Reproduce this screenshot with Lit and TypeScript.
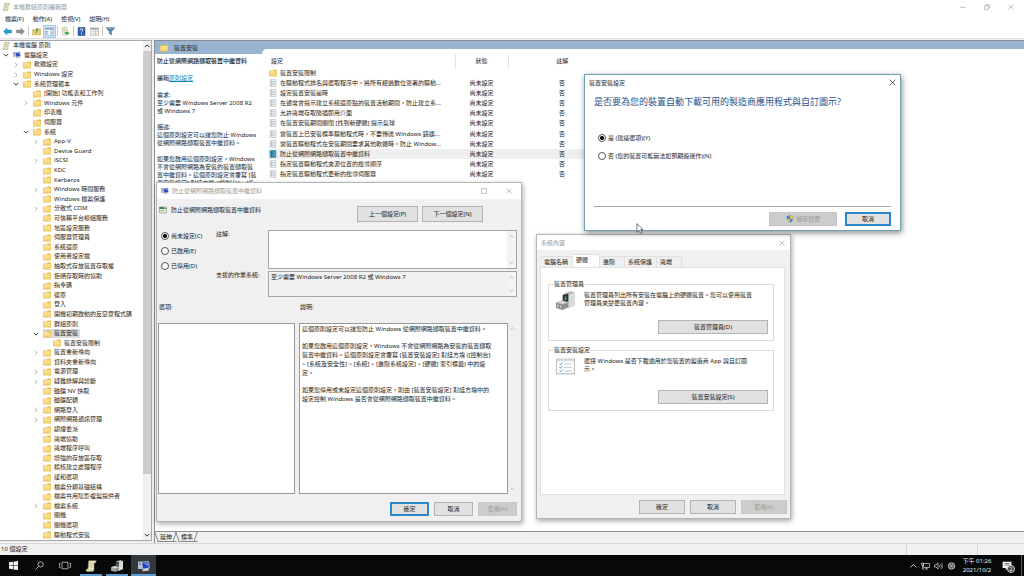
import { LitElement, html, css, svg, nothing } from "lit";
import { customElement, property } from "lit/decorators.js";
import { classMap } from "lit/directives/class-map.js";

const base = css`
  *, *::before, *::after { box-sizing: border-box; }
  :host {
    font-family: "Noto Sans", "Noto Sans CJK TC", sans-serif;
    font-size: 6px;
    line-height: 8px;
    color: #1c1c1c;
  }
  button, textarea, input { font: inherit; color: inherit; margin: 0; padding: 0; }
  button { background: none; border: 0; white-space: nowrap; }
  h1, h2, p, ul, fieldset { margin: 0; padding: 0; font-weight: normal; font-size: inherit; }
  .btn { background: #e1e1e1; border: 1px solid #b4b4b4; line-height: 10px; text-align: center; }
  .btn.primary { border: 2px solid #2b88cb; }
  .btn:disabled { background: #cccccc; border-color: #c6c6c6; color: #9a9a9a; }
  .radio { display: flex; align-items: center; gap: 2px; line-height: 8px; }
  .radio input {
    appearance: none; width: 8px; height: 8px; flex: none;
    border: 1px solid #555; border-radius: 50%; background: #fff;
  }
  .radio input:checked { background: radial-gradient(circle, #111 0 1.6px, #fff 2.4px); }
`;

const glyphs: Record<string, { box: string; art: unknown }> = {
  folder: { box: "0 0 16 16", art: svg`<path d="M0 3h8l1-2h6q1 0 1 1v13H0z" fill="#e3bf5a"/><path d="M1 4h14v10H1z" fill="#fbdd8b"/><path d="M1 11h14v3H1z" fill="#f3cf6e"/>` },
  scroll: { box: "0 0 16 16", art: svg`<path d="M5 1h10l-1 3h-2v9q0 2-2 2H2q-1-2 1-3h1z" fill="#f2eebd" stroke="#8b8a70" stroke-width=".9"/><path d="M6 4h4M6 6.5h4M6 9h4" stroke="#a4a283"/><path d="M2 12h8v3H2z" fill="#d9d49c"/>` },
  monitor: { box: "0 0 16 16", art: svg`<path d="M0 2h6v10H0z" fill="#b9bfcc"/><path d="M1 4h3M1 6h3" stroke="#69738a"/><path d="M5 3l9-1 1 9-9 1z" fill="#2445b8" stroke="#d5dbe8"/><path d="M8 4l5 0 0 4z" fill="#6e9af0"/><path d="M5 13l8-2 2 3-8 1z" fill="#ccd2dc"/>` },
  policy: { box: "0 0 12 14", art: svg`<path d="M1 1h10v12H1z" fill="#fafafa" stroke="#a5adb4"/><path d="M3 4h2M3 7h2M3 10h2" stroke="#3c5265" stroke-width="1.4"/><path d="M6.500 4h3M6.500 7h3M6.500 10h3" stroke="#8a959f"/>` },
  policySel: { box: "0 0 12 14", art: svg`<path d="M1 1h10v12H1z" fill="#3c91b8" stroke="#2b7fa6"/><path d="M3 4h2M3 7h2M3 10h2" stroke="#12384e" stroke-width="1.4"/><path d="M6.500 4h3M6.500 7h3M6.500 10h3" stroke="#79b9d4"/>` },
  setting: { box: "0 0 16 16", art: svg`<path d="M1 2h14v12H1z" fill="#f5f3df" stroke="#678"/><path d="M1 2h14v4H1z" fill="#377f86"/><path d="M3 9l2 2 3-4" stroke="#2b8a3f" fill="none" stroke-width="1.5"/><path d="M9 9h4M9 12h4" stroke="#b48b3c"/><path d="M10 2h5v3h-5z" fill="#e4c64e"/>` },
  right: { box: "0 0 8 8", art: svg`<path d="M2.500 1l3 3-3 3" fill="none" stroke="#9a9a9a"/>` },
  down: { box: "0 0 8 8", art: svg`<path d="M1 2.500l3 3 3-3" fill="none" stroke="#333" stroke-width="1.3"/>` },
  up: { box: "0 0 8 8", art: svg`<path d="M1 5.500l3-3 3 3" fill="none" stroke="#333" stroke-width="1.3"/>` },
  upDim: { box: "0 0 8 8", art: svg`<path d="M1 5.500l3-3 3 3" fill="none" stroke="#aaa" stroke-width="1.2"/>` },
  downDim: { box: "0 0 8 8", art: svg`<path d="M1 2.500l3 3 3-3" fill="none" stroke="#aaa" stroke-width="1.2"/>` },
  close: { box: "0 0 10 10", art: svg`<path d="M1 1l8 8M9 1l-8 8" stroke="currentColor" fill="none"/>` },
  max: { box: "0 0 10 10", art: svg`<path d="M1 1h8v8H1z" stroke="currentColor" fill="none"/>` },
  restore: { box: "0 0 10 10", art: svg`<path d="M1 3h6v6H1zM3 3V1h6v6H7" stroke="currentColor" fill="none"/>` },
  min: { box: "0 0 10 10", art: svg`<path d="M0 5.500h10" stroke="currentColor"/>` },
  back: { box: "0 0 16 14", art: svg`<path d="M1 7l6-6v3.500h8v5H7V13z" fill="#2f9bd8" stroke="#1c75ad" stroke-width=".8"/>` },
  forward: { box: "0 0 16 14", art: svg`<path d="M15 7L9 1v3.500H1v5h8V13z" fill="#8d8f92" stroke="#747678" stroke-width=".8"/>` },
  upFolder: { box: "0 0 16 16", art: svg`<path d="M1 5h5l1-2h8v11H1z" fill="#ecd074" stroke="#c2a14a"/><path d="M4 11q3 0 4-5L6 7l3-5 3 4-2 0q-1 6-6 5z" fill="#3ba141"/>` },
  tree: { box: "0 0 16 14", art: svg`<path d="M.5.5h15v13H.5z" fill="#fff" stroke="#7890a8"/><path d="M1 1h14v3H1z" fill="#8ea9c2"/><path d="M3 6v6M3 7h3M3 10h3M9 6h5M9 8.500h5M9 11h5" stroke="#5b7fa3"/>` },
  exportList: { box: "0 0 16 16", art: svg`<path d="M2 1h9v13H2z" fill="#fbf7d8" stroke="#aaa887"/><path d="M4 4h5M4 6.500h5M4 9h3" stroke="#8d9ba5"/><path d="M7 9h4V7l4 4-4 4v-2H7z" fill="#43ae49"/>` },
  help: { box: "0 0 14 16", art: svg`<path d="M1 1h12v14H1z" fill="#2857b3" stroke="#17356f"/><path d="M4.500 6q0-3 2.500-3t2.500 2.300q0 1.700-2.500 3.200V10M7 11.500v2" stroke="#fff" stroke-width="1.700" fill="none"/>` },
  pane: { box: "0 0 16 14", art: svg`<path d="M.5.5h15v13H.5z" fill="#fff" stroke="#8b8b8b"/><path d="M1 1h14v3H1z" fill="#a9a9a9"/><path d="M9.500 4v9M3 7h5M3 10h5M11 7h3M11 10h3" stroke="#999"/>` },
  filter: { box: "0 0 16 16", art: svg`<path d="M1 1h14v2L10 8v6l-4-2V8L1 3z" fill="#5c86a5" stroke="#40647f" stroke-width=".7"/><path d="M3 2h10" stroke="#b8d3e4"/>` },
  device: { box: "0 0 20 20", art: svg`<path d="M9 2l7-2 4 2v13l-7 3-4-2z" fill="#b9bbbd"/><path d="M13 4l7-2v13l-7 3z" fill="#d9dadb"/><path d="M7 4l6-1v8l-6 1z" fill="#2c3133"/><path d="M9 6l2-.5v4L9 10z" fill="#4e9c63"/><path d="M0 12l6-2 7 2v5l-6 3-7-2z" fill="#8e9194"/><path d="M0 12l6-2 7 2-6 2z" fill="#d4d6d8"/><path d="M2 14.500v2M5 15.500v2" stroke="#f4f4f4"/>` },
  checklist: { box: "0 0 54 44", art: svg`<path d="M1 1h52v42H1z" fill="#fdfdfd" stroke="#8c8f92" stroke-width="2"/><path d="M2 2h50v5H2z" fill="#d7dade"/><path d="M10 14l3 3 5-6M10 24l3 3 5-6M10 34l3 3 5-6" stroke="#2b8dcc" stroke-width="2.500" fill="none"/><path d="M23 15h22M23 25h22M23 35h22" stroke="#aab3ba" stroke-width="2"/>` },
  shield: { box: "0 0 16 16", art: svg`<path d="M8 0q3 2 7 2 0 10-7 14Q1 12 1 2q4 0 7-2z" fill="#4d83b5"/><path d="M8 0q3 2 7 2 0 3-.5 6H8zM8 8v8Q3 13 1.600 8z" fill="#d6c367"/>` },
  cursor: { box: "0 0 12 18", art: svg`<path d="M1 1v14l3.500-3.200L7 17l2.300-1-2.400-5H11z" fill="#fff" stroke="#222"/>` },
  windows: { box: "0 0 16 16", art: svg`<path d="M0 2.300L7 1.300v6.300H0zM8 1.200L16 0v7.600H8zM0 8.500h7v6.300l-7-1zM8 8.500h8V16l-8-1.100z" fill="#f4f4f4"/>` },
  search: { box: "0 0 16 16", art: svg`<circle cx="10" cy="6" r="4.700" fill="none" stroke="#ddd" stroke-width="1.400"/><path d="M6.500 9.500L1 15" stroke="#ddd" stroke-width="1.500"/>` },
  taskview: { box: "0 0 22 16", art: svg`<path d="M5.500 2h11v12h-11zM3 4H1v8h2M19 4h2v8h-2" fill="none" stroke="#ccc" stroke-width="1.400"/>` },
  chevUp: { box: "0 0 12 12", art: svg`<path d="M1 8.500l5-5 5 5" fill="none" stroke="#eee" stroke-width="1.400"/>` },
  network: { box: "0 0 18 16", art: svg`<path d="M5 3h12v8H5zM8 14h6M11 11v3M1 2h4v4H1zM3 6v8h4" fill="none" stroke="#e8e8e8" stroke-width="1.300"/>` },
  volume: { box: "0 0 18 16", art: svg`<path d="M1 6h3l4-4v12l-4-4H1z" fill="none" stroke="#e8e8e8" stroke-width="1.300"/><path d="M10.500 5.500q2 2.500 0 5M13 3.500q3.500 4.500 0 9M15.500 2q4 6 0 12" fill="none" stroke="#ddd" stroke-width="1.100"/>` },
  circleX: { box: "0 0 16 16", art: svg`<circle cx="8" cy="8" r="6.500" fill="#555" stroke="#ddd" stroke-width="1.500"/><path d="M5 5l6 6M11 5l-6 6" stroke="#eee" stroke-width="1.300"/>` },
  notice: { box: "0 0 16 16", art: svg`<path d="M1 1h14v10H9l-3 4v-4H1z" fill="#f4f4f4"/><path d="M4 4h8M4 6.500h8" stroke="#333"/>` },
};

@customElement("ui-glyph")
class UiGlyph extends LitElement {
  static styles = css`
    :host { display: inline-block; flex: none; width: 8px; height: 8px; }
    .art { display: block; width: 100%; height: 100%; }
  `;
  @property() name = "";
  render() {
    const g = glyphs[this.name];
    return g ? html`<svg class="art" viewBox=${g.box} aria-hidden="true">${g.art}</svg>` : nothing;
  }
}

type Row = [label: string, depth: number, arrow?: "right" | "down" | ""];
const treeRows: Row[] = [
  ["本機電腦 原則", 0], ["電腦設定", 1, "down"], ["軟體設定", 2, "right"], ["Windows 設定", 2, "right"],
  ["系統管理範本", 2, "down"], ["[開始] 功能表和工作列", 3], ["Windows 元件", 3, "right"], ["印表機", 3],
  ["伺服器", 3], ["系統", 3, "down"], ["App-V", 4, "right"], ["Device Guard", 4], ["iSCSI", 4, "right"],
  ["KDC", 4], ["Kerberos", 4], ["Windows 時間服務", 4, "right"], ["Windows 檔案保護", 4],
  ["分散式 COM", 4, "right"], ["可信賴平台模組服務", 4], ["地區設定服務", 4], ["伺服器管理員", 4],
  ["系統還原", 4], ["使用者設定檔", 4], ["抽取式存放裝置存取權", 4], ["拒絕存取時的協助", 4],
  ["指令碼", 4], ["復原", 4], ["登入", 4], ["開機初期啟動的反惡意程式碼", 4], ["群組原則", 4],
  ["裝置安裝", 4, "down"], ["裝置安裝限制", 5], ["裝置重新導向", 4, "right"], ["資料夾重新導向", 4],
  ["電源管理", 4, "right"], ["疑難排解與診斷", 4, "right"], ["磁碟 NV 快取", 4], ["磁碟配額", 4],
  ["網路登入", 4, "right"], ["網際網路通訊管理", 4, "right"], ["認證委派", 4], ["遠端協助", 4],
  ["遠端程序呼叫", 4], ["增強的存放區存取", 4], ["稽核建立處理程序", 4], ["緩和選項", 4],
  ["檔案分類基礎結構", 4], ["檔案共用陰影複製提供者", 4], ["檔案系統", 4, "right"], ["關機", 4],
  ["關機選項", 4], ["驅動程式安裝", 4],
];

@customElement("policy-tree")
class PolicyTree extends LitElement {
  static styles = [base, css`
    :host { display: flex; width: 152px; flex: none; background: #fff; border: 1px solid #a5a9ae; border-left: 0; overflow: hidden; }
    .list { flex: 1; min-width: 0; display: flex; flex-direction: column; list-style: none; }
    .row { flex: 1; display: flex; align-items: center; min-height: 0; white-space: nowrap; line-height: 9px; }
    .indent { flex: none; }
    .arrow { width: 6px; height: 6px; margin-right: 4px; }
    .name { display: flex; align-items: center; gap: 3px; padding-right: 2px; }
    .selected .name { background: #dadada; }
    .bar { width: 8px; background: #f0f0f0; display: flex; flex-direction: column; align-items: center; }
    .cap { width: 6px; height: 10px; }
    .thumb { width: 100%; flex: 1; background: #cdcdcd; }
    .rest { flex: none; height: 56px; }
  `];
  render() {
    return html`
      <ul class="list">
        ${treeRows.map(([label, depth, arrow]) => html`
          <li class=${classMap({ row: true, selected: label === "裝置安裝" })}>
            <span class="indent" style="width:${depth === 0 ? 2 : (depth - 1) * 10 + 3}px"></span>
            ${depth === 0 ? nothing : html`<ui-glyph class="arrow" name=${arrow ?? ""}></ui-glyph>`}
            <span class="name">
              <ui-glyph name=${depth === 0 ? "scroll" : depth === 1 ? "monitor" : "folder"}></ui-glyph>${label}
            </span>
          </li>`)}
      </ul>
      <div class="bar">
        <ui-glyph class="cap" name="up"></ui-glyph><div class="thumb"></div>
        <div class="rest"></div><ui-glyph class="cap" name="down"></ui-glyph>
      </div>`;
  }
}

const settings = [
  "裝置安裝限制",
  "在驅動程式排名與選取程序中，將所有經過數位簽署的驅動...",
  "設定裝置安裝逾時",
  "在通常會提示建立系統還原點的裝置活動期間，防止建立系...",
  "允許遠端存取隨插即用介面",
  "在裝置安裝期間關閉 [找到新硬體] 提示氣球",
  "當裝置上已安裝標準驅動程式時，不要傳送 Windows 錯誤...",
  "當裝置驅動程式在安裝期間要求其他軟體時，防止 Window...",
  "防止從網際網路擷取裝置中繼資料",
  "指定裝置驅動程式來源位置的搜尋順序",
  "指定裝置驅動程式更新的搜尋伺服器",
];

@customElement("policy-list")
class PolicyList extends LitElement {
  static styles = [base, css`
    :host { display: flex; flex-direction: column; flex: 1; min-width: 0; background: #f0f0f0; border-left: 1px solid #8a8d91; border-top: 1px solid #8a8d91; }
    .head { height: 13px; background: #99b4d1; display: flex; }
    .caption { display: flex; align-items: center; gap: 6px; padding-left: 5px; width: 107px; }
    .curve { flex: 1; display: flex; align-items: flex-end; }
    .curve::before { content: ""; flex: 1; height: 5px; background: #fff; border-top-left-radius: 6px; }
    .content { flex: 1; min-height: 0; display: flex; background: #fff; overflow: hidden; }
    .about { width: 113px; flex: none; padding: 3px 0 0 2px; white-space: pre; }
    .about .title { font-weight: 500; }
    .about p { margin-top: 8px; }
    .about .edit { margin: 9px 0; }
    a { color: #1683b8; }
    .grid { flex: 1; min-width: 0; height: 125px; border-collapse: collapse; table-layout: fixed; }
    th { font-weight: normal; height: 14px; padding: 0; }
    th:first-child { text-align: left; padding-left: 3px; }
    .wide { width: 187px; } .mid { width: 53px; } .note { width: 108px; }
    th.wide, th.mid { border-right: 1px solid #e3e3e3; }
    td { padding: 0; text-align: center; white-space: nowrap; }
    .name { display: flex; align-items: center; gap: 3px; padding-left: 1px; }
    .selected td:not(:last-child) { background: #efefef; }
    .tabs { display: flex; height: 12px; border-top: 1px solid #8d8d8d; padding-left: 1px; position: relative; z-index: 0; }
    .tab { height: 10px; margin-right: 2px; padding: 0 3px 0 4px; position: relative; line-height: 9px; }
    .tab::before { content: ""; position: absolute; inset: 0; z-index: -1; border: 1px solid #888; border-top: 0; border-right: 0; transform: skewX(20deg); }
    .tab::after { content: ""; position: absolute; inset: 0; z-index: -1; border-right: 1px solid #888; transform: skewX(-20deg); }
  `];
  render() {
    return html`
      <div class="head"><h2 class="caption"><ui-glyph name="folder"></ui-glyph>裝置安裝</h2><span class="curve"></span></div>
      <div class="content">
        <div class="about"><div class="title">防止從網際網路擷取裝置中繼資料</div><div class="edit">編輯<a href="#">原則設定</a></div><div>需求:
至少需要 Windows Server 2008 R2
或 Windows 7</div><p>描述:
這個原則設定可以讓您防止 Windows
從網際網路擷取裝置中繼資料。</p><p>如果您啟用這個原則設定，Windows
不會從網際網路為安裝的裝置擷取裝
置中繼資料。這個原則設定會覆寫 [裝
置安裝設定] 對話方塊 ([控制台] > [系</p></div>
        <table class="grid">
          <thead><tr><th class="wide">設定</th><th class="mid">狀態</th><th class="note">註解</th><th></th></tr></thead>
          <tbody>
            ${settings.map((s, i) => html`
              <tr class=${classMap({ selected: i === 8 })}>
                <td><span class="name"><ui-glyph name=${i === 0 ? "folder" : i === 8 ? "policySel" : "policy"}></ui-glyph>${s}</span></td>
                <td>${i ? "尚未設定" : ""}</td><td>${i ? "否" : ""}</td><td></td>
              </tr>`)}
          </tbody>
        </table>
      </div>
      <div class="tabs"><button class="tab">延伸</button><button class="tab">標準</button></div>`;
  }
}

@customElement("policy-dialog")
class PolicyDialog extends LitElement {
  static styles = [base, css`
    :host { display: block; background: #f0f0f0; border: 1px solid #b5b5b5; box-shadow: 1px 2px 5px rgba(0, 0, 0, 0.35); }
    .bar { display: flex; align-items: center; height: 16px; background: #fff; color: #999; padding: 0 9px 0 4px; gap: 3px; }
    .bar h2 { flex: 1; }
    .ctl { width: 6px; height: 6px; display: flex; margin-left: 16px; }
    .ctl ui-glyph { width: 6px; height: 6px; }
    .top { display: flex; padding: 7px 38px 0 2px; gap: 4px; align-items: flex-start; }
    .top h1 { flex: 1; display: flex; align-items: center; gap: 4px; }
    .top .btn { width: 61px; height: 16px; }
    .form { display: grid; grid-template-columns: 51px 48px 1fr; column-gap: 4px; row-gap: 2px; padding: 8px 4px 0 4px; }
    .states { grid-row: 1 / 3; display: flex; flex-direction: column; gap: 7px; padding-top: 2px; }
    .form .lab { white-space: nowrap; }
    .box { display: flex; background: #fff; border: 1px solid #a5a5a5; }
    .box textarea { flex: 1; border: 0; outline: 0; resize: none; background: none; padding: 1px 2px; overflow: hidden; min-width: 0; display: block; }
    .note { height: 39px; } .sup { height: 26px; background: none; }
    .scroll { width: 9px; background: #f3f3f3; display: flex; flex-direction: column; justify-content: space-between; align-items: center; padding: 3px 0; }
    .scroll ui-glyph { width: 5px; height: 5px; }
    .panes { display: grid; grid-template-columns: 137px 1fr; column-gap: 4px; row-gap: 12px; padding: 6px 4px 0 1px; }
    .panes .lab { padding-left: 1px; }
    .help { display: flex; }
    .help .panel { flex: 1; }
    .panel { height: 171px; background: #fff; border: 1px solid #999; padding: 1px 2px; line-height: 9px; white-space: pre; }
    .panel p + p { margin-top: 8px; }
    .help .scroll { background: none; }
    .foot { display: flex; justify-content: flex-end; gap: 5px; padding: 8px 4px 5px; }
    .foot .btn { width: 39px; height: 14px; }
  `];
  render() {
    return html`
      <div class="bar"><ui-glyph name="monitor"></ui-glyph><h2>防止從網際網路擷取裝置中繼資料</h2>
        <button class="ctl" aria-label="最大化"><ui-glyph name="max"></ui-glyph></button>
        <button class="ctl" aria-label="關閉"><ui-glyph name="close"></ui-glyph></button></div>
      <div class="top"><h1><ui-glyph name="setting"></ui-glyph>防止從網際網路擷取裝置中繼資料</h1>
        <button class="btn">上一個設定(P)</button><button class="btn">下一個設定(N)</button></div>
      <div class="form">
        <div class="states">
          <label class="radio"><input type="radio" name="state" checked />尚未設定(C)</label>
          <label class="radio"><input type="radio" name="state" />已啟用(E)</label>
          <label class="radio"><input type="radio" name="state" />已停用(D)</label>
        </div>
        <label class="lab" for="note">註解:</label>
        <div class="box note"><textarea id="note"></textarea><span class="scroll"><ui-glyph name="upDim"></ui-glyph><ui-glyph name="downDim"></ui-glyph></span></div>
        <label class="lab" for="sup">支援的作業系統:</label>
        <div class="box sup"><textarea id="sup" readonly .value=${"至少需要 Windows Server 2008 R2 或 Windows 7"}></textarea><span class="scroll"><ui-glyph name="upDim"></ui-glyph><ui-glyph name="downDim"></ui-glyph></span></div>
      </div>
      <div class="panes">
        <div class="lab">選項:</div><div class="lab">說明:</div>
        <div class="panel"></div>
        <div class="help"><div class="panel"><p>這個原則設定可以讓您防止 Windows 從網際網路擷取裝置中繼資料。</p><p>如果您啟用這個原則設定，Windows 不會從網際網路為安裝的裝置擷取
裝置中繼資料。這個原則設定會覆寫 [裝置安裝設定] 對話方塊 ([控制台]
> [系統及安全性] > [系統] > [進階系統設定] > [硬體] 索引標籤) 中的設
定。</p><p>如果您停用或未設定這個原則設定，則由 [裝置安裝設定] 對話方塊中的
設定控制 Windows 是否會從網際網路擷取裝置中繼資料。</p></div><span class="scroll"><ui-glyph name="upDim"></ui-glyph><ui-glyph name="downDim"></ui-glyph></span></div>
      </div>
      <div class="foot"><button class="btn primary">確定</button><button class="btn">取消</button><button class="btn" disabled>套用(A)</button></div>`;
  }
}

@customElement("system-dialog")
class SystemDialog extends LitElement {
  static styles = [base, css`
    :host { display: block; background: #f0f0f0; border: 1px solid #b5b5b5; box-shadow: 1px 2px 5px rgba(0, 0, 0, 0.35); padding-bottom: 4px; }
    .bar { display: flex; align-items: center; justify-content: space-between; height: 15px; background: #fff; color: #999; padding: 0 5px 0 4px; }
    .x { display: flex; } .x ui-glyph { width: 6px; height: 6px; }
    .tabs { display: flex; align-items: flex-end; padding: 4px 4px 0; }
    .tab { height: 11px; padding: 0 4px 0 3px; border: 1px solid #e0e0e0; border-bottom: 0; border-left: 0; text-align: left; }
    .t2 { width: 25px; } .t4 { width: 32px; }
    .on { width: 27px; height: 13px; background: #fff; padding-bottom: 2px; }
    .page { background: #fff; border: 1px solid #e2e2e2; margin: 0 5px 0 3px; height: 228px; padding: 12px 10px 0 7px; }
    fieldset { border: 1px solid #dcdcdc; padding: 0 5px 6px 7px; min-width: 0; margin-bottom: 5px; display: block; }
    legend { padding: 0 1px; margin-left: -3px; line-height: 8px; }
    .info { display: flex; gap: 9px; padding-top: 3px; white-space: pre; }
    .pic { width: 19px; height: 19px; }
    .act { display: flex; justify-content: flex-end; }
    .act .btn { width: 110px; height: 14px; }
    .a1 { padding-top: 10px; } .a2 { padding-top: 14px; }
    .foot { display: flex; justify-content: flex-end; gap: 5px; padding: 5px 3px 0; }
    .foot .btn { width: 46px; height: 14px; }
  `];
  render() {
    return html`
      <div class="bar"><h2>系統內容</h2><button class="x" aria-label="關閉"><ui-glyph name="close"></ui-glyph></button></div>
      <div class="tabs"><button class="tab t4">電腦名稱</button><button class="tab on">硬體</button><button class="tab t2">進階</button><button class="tab t4">系統保護</button><button class="tab t2">遠端</button></div>
      <div class="page">
        <fieldset><legend>裝置管理員</legend>
          <div class="info"><ui-glyph class="pic" name="device"></ui-glyph><p>裝置管理員列出所有安裝在電腦上的硬體裝置。您可以使用裝置
管理員來變更裝置內容。</p></div>
          <div class="act a1"><button class="btn">裝置管理員(D)</button></div></fieldset>
        <fieldset><legend>裝置安裝設定</legend>
          <div class="info"><ui-glyph class="pic" name="checklist"></ui-glyph><p>選擇 Windows 是否下載適用於您裝置的製造商 App 與自訂圖
示。</p></div>
          <div class="act a2"><button class="btn">裝置安裝設定(S)</button></div></fieldset>
      </div>
      <div class="foot"><button class="btn">確定</button><button class="btn">取消</button><button class="btn" disabled>套用(A)</button></div>`;
  }
}

@customElement("install-dialog")
class InstallDialog extends LitElement {
  static styles = [base, css`
    :host { display: block; background: #fff; border: 1px solid #6f9fb4; box-shadow: 1px 2px 6px rgba(0, 0, 0, 0.45); }
    .bar { display: flex; align-items: center; justify-content: space-between; height: 15px; padding: 0 4px; }
    .x { display: flex; } .x ui-glyph { width: 7px; height: 7px; }
    .body { padding: 5px 9px 4px; }
    h1 { font-size: 9px; line-height: 13px; color: #1f5189; white-space: nowrap; }
    .opts { display: flex; flex-direction: column; gap: 10px; padding: 26px 4px 46px; height: 98px; }
    .foot { display: flex; justify-content: flex-end; gap: 8px; border-top: 1px solid #a6a6a6; padding-top: 5px; }
    .btn { width: 46px; height: 14px; }
    .save { width: 68px; display: flex; align-items: center; justify-content: center; gap: 2px; }
  `];
  render() {
    return html`
      <div class="bar"><h2>裝置安裝設定</h2><button class="x" aria-label="關閉"><ui-glyph name="close"></ui-glyph></button></div>
      <div class="body">
        <h1>是否要為您的裝置自動下載可用的製造商應用程式與自訂圖示?</h1>
        <div class="opts">
          <label class="radio"><input type="radio" name="auto" checked />是 (建議選項)(Y)</label>
          <label class="radio"><input type="radio" name="auto" />否 (您的裝置可能無法如預期般運作)(N)</label>
        </div>
        <div class="foot"><button class="btn save" disabled><ui-glyph name="shield"></ui-glyph>儲存變更</button><button class="btn primary">取消</button></div>
      </div>`;
  }
}

@customElement("task-bar")
class TaskBar extends LitElement {
  static styles = [base, css`
    :host { display: flex; height: 21px; flex: none; background: #060809; color: #eee; justify-content: space-between; }
    .apps, .tray { display: flex; align-items: stretch; }
    .app { width: 26px; display: flex; align-items: center; justify-content: center; border-bottom: 2px solid transparent; padding-top: 2px; }
    .open { border-color: #5b9bd0; width: 22px; margin: 0 2px; }
    .open ui-glyph { width: 12px; height: 12px; }
    .active { width: 25px; margin: 0 0 0 1px; background: #33383c; }
    .start ui-glyph { width: 9px; height: 9px; } .view ui-glyph { width: 12px; height: 9px; }
    .tray { align-items: center; gap: 4px; }
    .tray ui-glyph { width: 9px; height: 8px; }
    .tray .chev { width: 7px; }
    .clock { width: 34px; text-align: center; line-height: 9px; margin-right: 4px; padding-top: 1px; }
    .notice { position: relative; display: flex; margin-right: 5px; }
    .tray .notice ui-glyph { width: 10px; height: 10px; }
    .badge { position: absolute; left: 5px; top: 4px; width: 8px; height: 8px; border-radius: 50%; background: #444; border: 1px solid #ccc; line-height: 6px; text-align: center; }
    .peek { width: 3px; align-self: stretch; border-left: 1px solid #555; }
  `];
  render() {
    return html`
      <div class="apps">
        <button class="app start" aria-label="開始"><ui-glyph name="windows"></ui-glyph></button>
        <button class="app start" aria-label="搜尋"><ui-glyph name="search"></ui-glyph></button>
        <button class="app view" aria-label="工作檢視"><ui-glyph name="taskview"></ui-glyph></button>
        <button class="app open" aria-label="原則編輯器"><ui-glyph name="scroll"></ui-glyph></button>
        <button class="app open" aria-label="裝置"><ui-glyph name="device"></ui-glyph></button>
        <button class="app open active" aria-label="系統"><ui-glyph name="monitor"></ui-glyph></button>
      </div>
      <div class="tray"><ui-glyph class="chev" name="chevUp"></ui-glyph><ui-glyph name="network"></ui-glyph><ui-glyph name="volume"></ui-glyph><ui-glyph name="circleX"></ui-glyph>
        <div class="clock">下午 01:26<br />2021/10/2</div>
        <span class="notice"><ui-glyph name="notice"></ui-glyph><span class="badge">2</span></span><span class="peek"></span></div>`;
  }
}

@customElement("app-root")
class AppRoot extends LitElement {
  static styles = [base, css`
    :host { display: flex; flex-direction: column; height: 100vh; overflow: hidden; position: relative; background: #f0f0f0; }
    .title { display: flex; align-items: center; height: 13px; flex: none; background: #fff; color: #999; padding: 0 10px 0 2px; gap: 3px; }
    .title h1 { flex: 1; }
    .title button { display: flex; margin-left: 15px; }
    .title button ui-glyph { width: 6px; height: 6px; }
    .menu { display: flex; height: 11px; flex: none; gap: 9px; padding-left: 5px; background: #fff; line-height: 10px; }
    .tools { display: flex; align-items: center; height: 15px; flex: none; background: #fff; padding-left: 2px; gap: 2px; border-bottom: 1px solid #e2e2e2; }
    .tool { display: flex; width: 11px; height: 11px; align-items: center; justify-content: center; }
    .tool ui-glyph { width: 9px; height: 9px; }
    .pressed { background: #cce6f8; outline: 1px solid #a2cdea; }
    .sep { width: 1px; height: 10px; background: #c9c9c9; }
    .main { flex: 1; min-height: 0; display: flex; gap: 2px; padding-top: 1px; }
    .main policy-tree { margin-bottom: 2px; }
    .status { display: flex; height: 12px; flex: none; border-top: 1px solid #d8d8d8; line-height: 11px; padding-left: 1px; }
    .status .msg { flex: 1; }
    .cell { border-left: 1px solid #d8d8d8; width: 71px; } .cell.end { width: 47px; }
    .window { position: absolute; }
    .policy { left: 156px; top: 182px; width: 366px; }
    .system { left: 536px; top: 234px; width: 255px; }
    .install { left: 584px; top: 74px; width: 317px; }
    .pointer { position: absolute; left: 636px; top: 223px; width: 8px; height: 11px; }
  `];
  render() {
    const tool = (name: string, label: string, on = false) =>
      html`<button class=${classMap({ tool: true, pressed: on })} aria-label=${label}><ui-glyph name=${name}></ui-glyph></button>`;
    const sep = html`<span class="sep"></span>`;
    return html`
      <header class="title"><ui-glyph name="scroll"></ui-glyph><h1>本機群組原則編輯器</h1>
        <button aria-label="最小化"><ui-glyph name="min"></ui-glyph></button>
        <button aria-label="還原"><ui-glyph name="restore"></ui-glyph></button>
        <button aria-label="關閉"><ui-glyph name="close"></ui-glyph></button></header>
      <nav class="menu"><button>檔案(F)</button><button>動作(A)</button><button>檢視(V)</button><button>說明(H)</button></nav>
      <div class="tools">
        ${tool("back", "上一頁")}${tool("forward", "下一頁")}${sep}${tool("upFolder", "上一層")}${tool("tree", "樹狀目錄", true)}${sep}
        ${tool("exportList", "匯出清單")}${sep}${tool("help", "說明")}${tool("pane", "窗格")}${sep}${tool("filter", "篩選")}
      </div>
      <main class="main"><policy-tree></policy-tree><policy-list></policy-list></main>
      <footer class="status"><span class="msg">10 個設定</span><span class="cell"></span><span class="cell end"></span></footer>
      <task-bar></task-bar>
      <policy-dialog class="window policy"></policy-dialog>
      <system-dialog class="window system"></system-dialog>
      <install-dialog class="window install"></install-dialog>
      <ui-glyph class="pointer" name="cursor"></ui-glyph>`;
  }
}
